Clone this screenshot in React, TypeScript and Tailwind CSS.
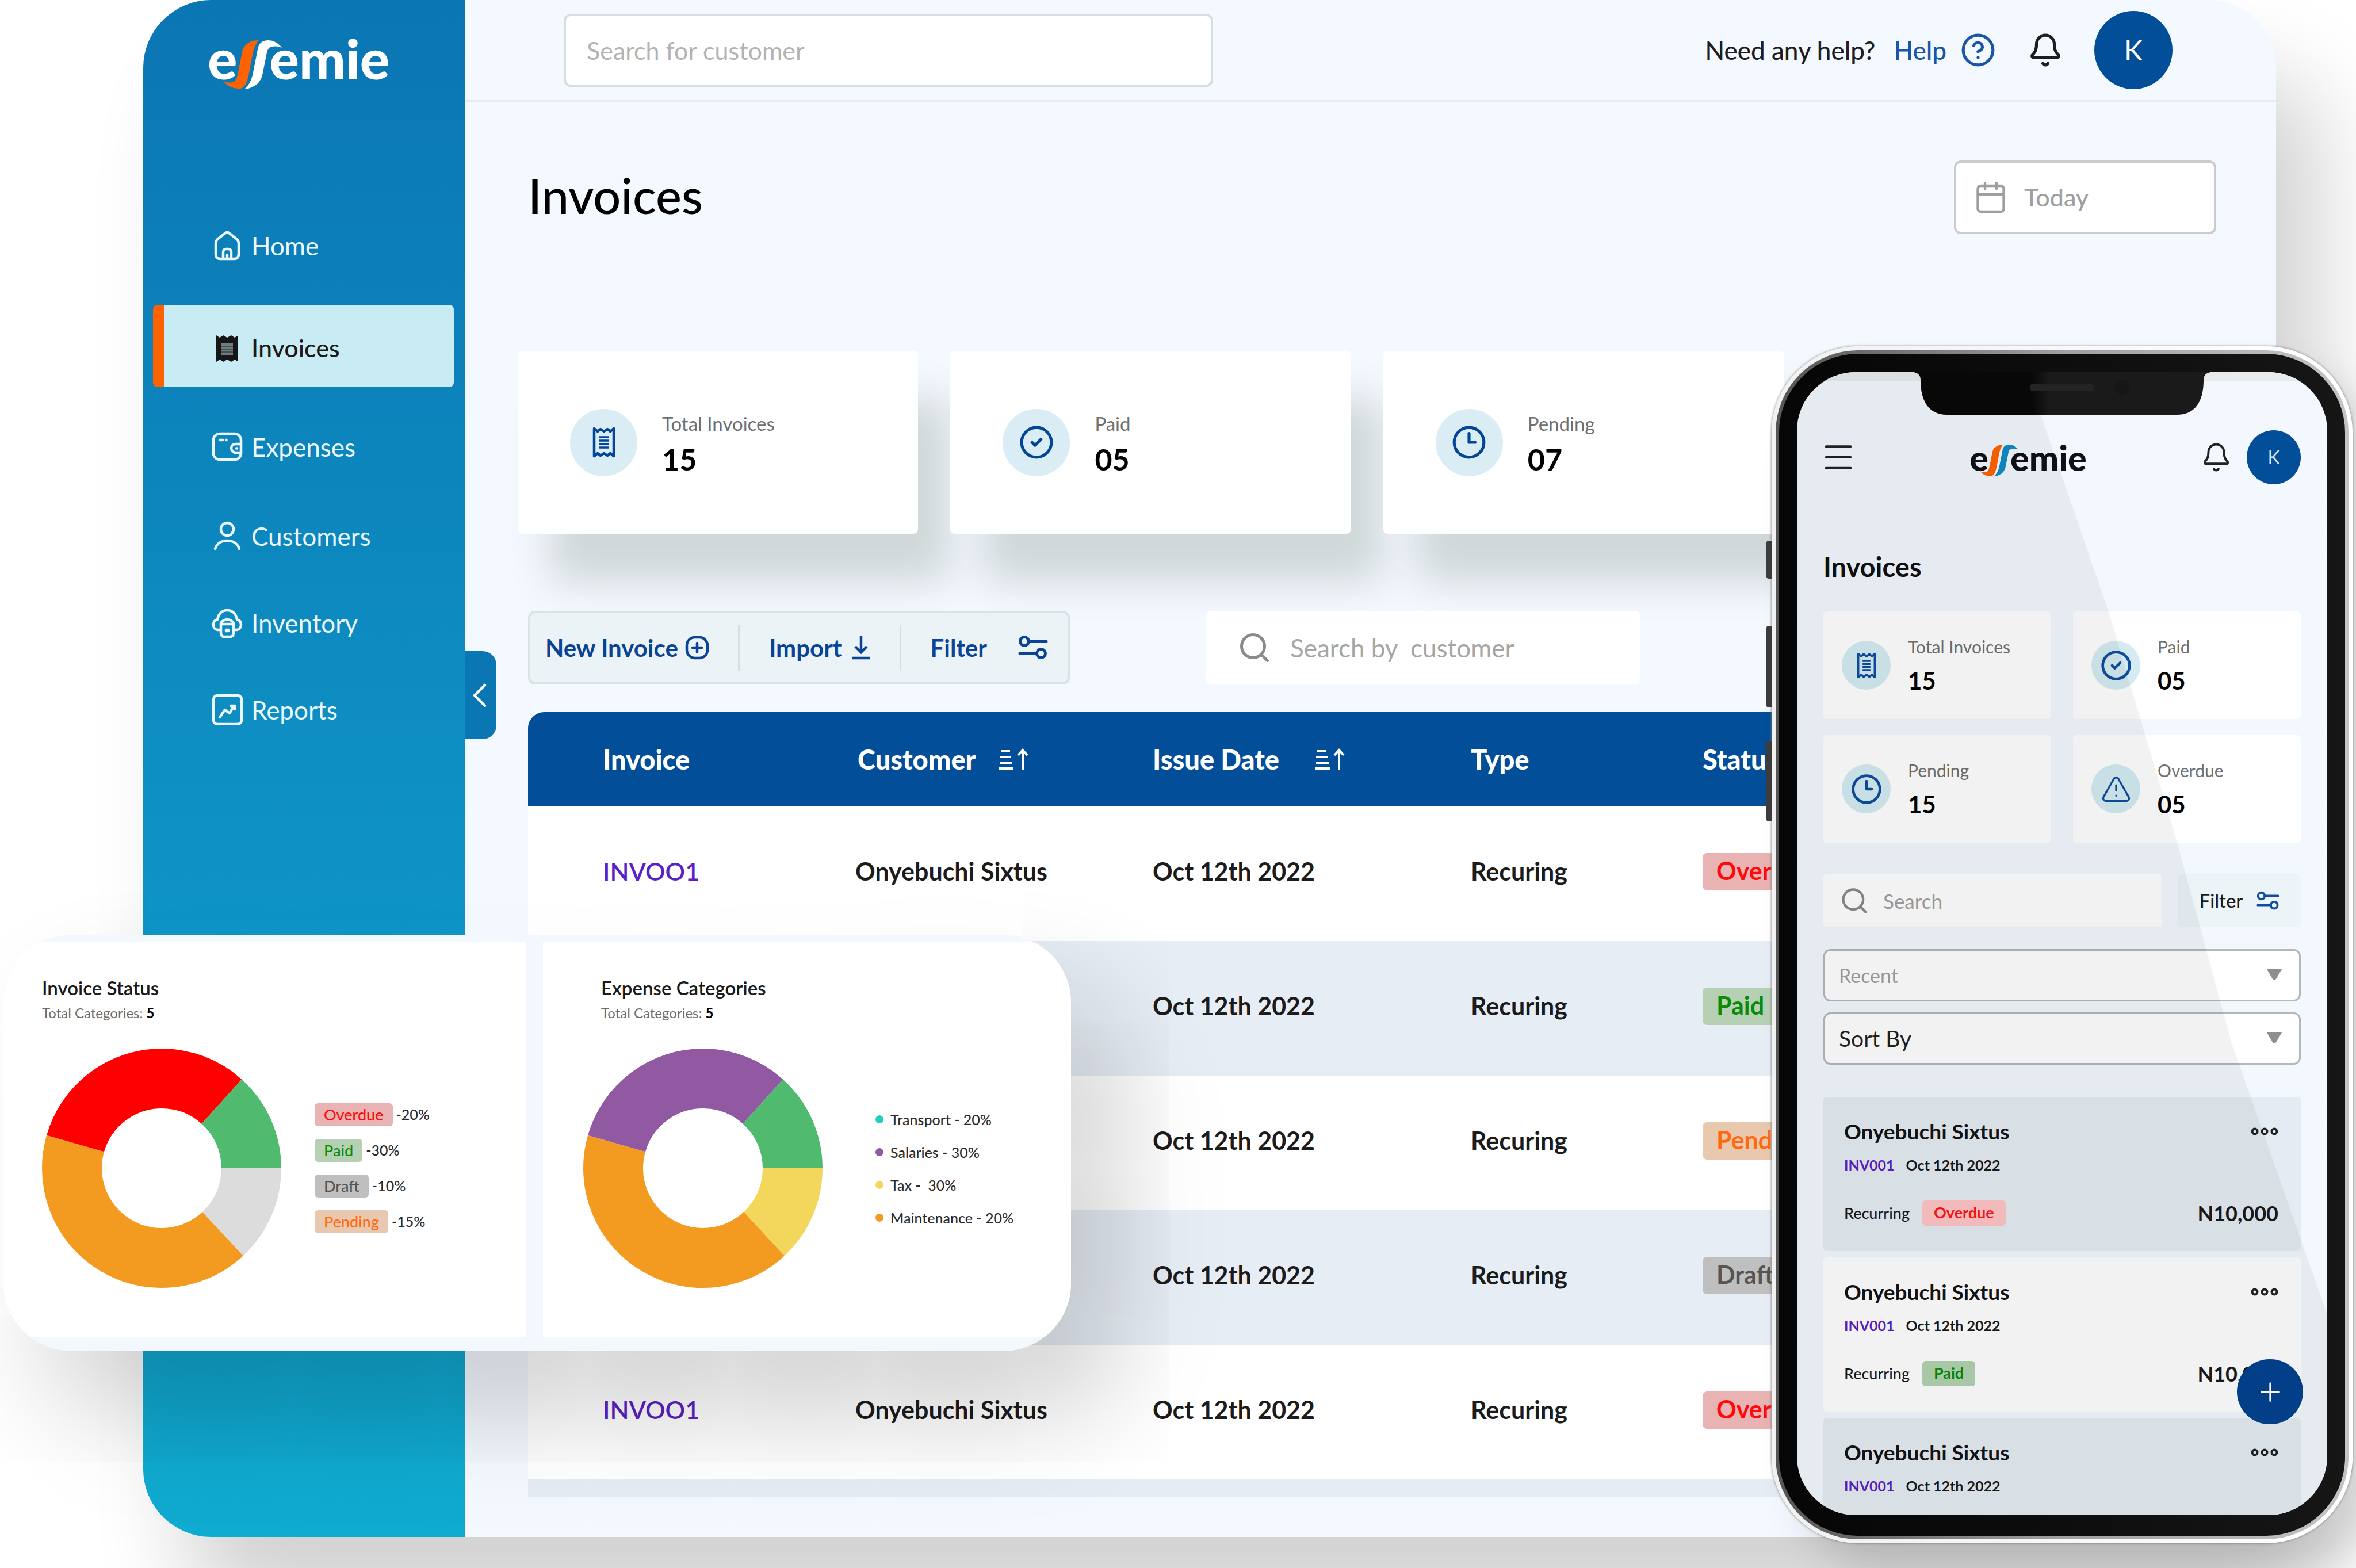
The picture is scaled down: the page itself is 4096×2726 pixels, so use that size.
import { ReactNode } from 'react';
import { Bell, Calendar, ChevronLeft, CircleCheck, CircleHelp, Clock3, Menu, Plus, Search, TriangleAlert } from 'lucide-react';

type Status = 'Overdue' | 'Paid' | 'Pending' | 'Draft';

const statusColors: Record<Status, string> = {
    Overdue: 'bg-[#e9b3b3] text-[#ff0a0a]',
    Paid: 'bg-[#b6d0b4] text-[#0a8c0a]',
    Pending: 'bg-[#e9c8b0] text-[#ff6a10]',
    Draft: 'bg-[#bfbfbf] text-[#555555]',
};

interface Invoice {
    id?: string;
    customer?: string;
    date: string;
    type: string;
    status: Status;
}

const invoices: Invoice[] = [
    { id: 'INVOO1', customer: 'Onyebuchi Sixtus', date: 'Oct 12th 2022', type: 'Recuring', status: 'Overdue' },
    { date: 'Oct 12th 2022', type: 'Recuring', status: 'Paid' },
    { date: 'Oct 12th 2022', type: 'Recuring', status: 'Pending' },
    { date: 'Oct 12th 2022', type: 'Recuring', status: 'Draft' },
    { id: 'INVOO1', customer: 'Onyebuchi Sixtus', date: 'Oct 12th 2022', type: 'Recuring', status: 'Overdue' },
];

/* ---------- icons ---------- */

function HomeIcon() {
    return (
        <svg viewBox="0 0 54 54" className="w-[54px] h-[54px]" fill="none" stroke="currentColor" strokeWidth="4.5" strokeLinejoin="round" strokeLinecap="round">
            <path d="M7 23c0-3 1-5 3-7L24 5c2-1.500 4-1.500 6 0l14 11c2 2 3 4 3 7v18c0 6-3 9-8 9H15c-5 0-8-3-8-9z" />
            <path d="M20 49V38c0-3 2-5 5-5h4c3 0 5 2 5 5v11M27 43v6" />
        </svg>
    );
}

function ReceiptSolidIcon() {
    return (
        <svg viewBox="0 0 54 54" className="w-[54px] h-[54px]">
            <path d="M8 4l6 4 6-4 7 4 7-4 6 4 6-4v46l-6-4-6 4-7-4-7 4-6-4-6 4z" fill="#161616" />
            <path d="M17 18h20v20H17z" fill="#6f7b7e" />
            <path d="M17 23h20M17 28h20M17 33h20" stroke="#3a4244" strokeWidth="1.500" />
        </svg>
    );
}

function WalletIcon() {
    return (
        <svg viewBox="0 0 54 54" className="w-[54px] h-[54px]" fill="none" stroke="currentColor" strokeWidth="4.5" strokeLinejoin="round" strokeLinecap="round">
            <rect x="3" y="4" width="48" height="45" rx="11" />
            <path d="M51 22H42c-5 0-8 3-8 7s3 8 8 8h9M43 29.500h1M14 15h5M25 15h.5" />
        </svg>
    );
}

function PersonIcon() {
    return (
        <svg viewBox="0 0 54 54" className="w-[54px] h-[54px]" fill="none" stroke="currentColor" strokeWidth="4.5" strokeLinecap="round">
            <circle cx="27" cy="15" r="11" />
            <path d="M6 49c3-9 11-14 21-14s18 5 21 14" />
        </svg>
    );
}

function InventoryIcon() {
    return (
        <svg viewBox="0 0 54 54" className="w-[54px] h-[54px]" fill="none" stroke="currentColor" strokeWidth="4.5" strokeLinejoin="round" strokeLinecap="round">
            <path d="M15 39H11c-5 0-8-4-8-9s3-8 7-9c2-10 8-16 17-16s15 6 17 16c4 1 7 4 7 9s-3 9-8 9h-4" />
            <path d="M16 27c3-4 6-6 11-6s8 2 11 6v17c0 4-2 7-6 7H22c-4 0-6-3-6-7z" />
            <path d="M16 29h22M25 39h4v2h-4z" />
        </svg>
    );
}

function ReportsIcon() {
    return (
        <svg viewBox="0 0 54 54" className="w-[54px] h-[54px]" fill="none" stroke="currentColor" strokeWidth="4.5" strokeLinejoin="round" strokeLinecap="round">
            <rect x="3" y="2" width="49" height="50" rx="7" />
            <path d="M14 40l9-13 8 6 8-13M33 20h7v6" />
        </svg>
    );
}

function ReceiptIcon({ className }: { className: string }) {
    return (
        <svg viewBox="0 0 40 56" className={className} fill="none" stroke="currentColor" strokeWidth="4.5">
            <path d="M3 4l6 5 5-4 6 4 6-4 5 4 6-5v48l-6-5-5 4-6-4-6 4-5-4-6 5z" strokeLinejoin="round" />
            <path d="M12 19h16M12 25h16M12 31h16M12 37h16" strokeWidth="3.500" />
        </svg>
    );
}

function AddSquareIcon() {
    return (
        <svg viewBox="0 0 42 42" className="w-[42px] h-[42px]" fill="none" stroke="currentColor" strokeWidth="4.5" strokeLinecap="round">
            <rect x="3" y="3" width="36" height="36" rx="14" />
            <path d="M21 13v16M13 21h16" />
        </svg>
    );
}

function ImportIcon() {
    return (
        <svg viewBox="0 0 34 44" className="w-[34px] h-[44px]" fill="none" stroke="currentColor" strokeWidth="4.5">
            <path d="M17 1v28M7 20l10 10 10-10M2 40h30" />
        </svg>
    );
}

function FilterIcon({ className }: { className: string }) {
    return (
        <svg viewBox="0 0 52 44" className={className} fill="none" stroke="currentColor" strokeWidth="5" strokeLinecap="round">
            <circle cx="11" cy="11" r="7.500" />
            <path d="M20 11h29M3 32h28" />
            <circle cx="40" cy="32" r="7.500" />
        </svg>
    );
}

function SortIcon() {
    return (
        <svg viewBox="0 0 52 40" className="w-[52px] h-[40px]" fill="none" stroke="currentColor" strokeWidth="4">
            <path d="M4 6h16M2 16h20M2 26h22M0 36h26M42 38V6M34 13l8-9 8 9" />
        </svg>
    );
}

function Logo({ textClass, markClass, first, second }: { textClass: string; markClass: string; first: string; second: string }) {
    return (
        <div className={`flex items-center font-black leading-none ${textClass}`}>
            <span>e</span>
            <svg viewBox="0 0 102 86" className={markClass}>
                <path d="M61 0C54 0 47 2 42 6C36 10 34 15 33 20L26 56C24 65 23 69 20 71C15 75 8 74 0 71C7 79 16 84 27 84C32 84 35 82 37 79C41 75 42 68 44 62L52 20C54 12 57 6 61 0Z" fill={first} />
                <path d="M102 13C95 4 87 0 78 0C70 0 64 4 62 9C60 13 60 17 59 21L52 56C50 68 45 78 37 85C47 84 56 80 62 73C66 68 68 62 69 56L76 21C78 14 80 12 86 11C92 10 97 11 102 13Z" fill={second} />
            </svg>
            <span>emie</span>
        </div>
    );
}

/* ---------- dashboard ---------- */

function NavItem({ icon, label, active, className }: { icon: ReactNode; label: string; active?: boolean; className: string }) {
    return (
        <a
            href="#"
            className={`flex items-center gap-[15px] pl-[83px] ml-[17px] mr-5 border-l-[19px] rounded-lg ${className} ${
                active ? 'pt-2 bg-[#c9ebf3] border-[#ff6200] text-[#1b1b1b] text-[43px] font-medium' : 'border-transparent text-[#eaf7ff] text-[44px]'
            }`}
        >
            {icon}
            {label}
        </a>
    );
}

function Sidebar() {
    return (
        <aside className="relative w-[560px] shrink-0 bg-gradient-to-b from-[#0b76b4] via-[#0e8fc2] to-[#10abd0]">
            <div className="pt-[46px] pl-[112px] h-[355px] text-white">
                <Logo textClass="text-[96px]" markClass="w-[102px] h-[86px] -ml-[24px] -mr-[22px] mt-[24px]" first="#ff6200" second="#ffffff" />
            </div>
            <nav>
                <div className="flex flex-col gap-8">
                    <NavItem className="h-[143px]" icon={<HomeIcon />} label="Home" />
                    <NavItem className="h-[143px]" icon={<ReceiptSolidIcon />} label="Invoices" active />
                    <NavItem className="h-[143px]" icon={<WalletIcon />} label="Expenses" />
                </div>
                <div className="flex flex-col pt-2">
                    <NavItem className="h-[151px]" icon={<PersonIcon />} label="Customers" />
                    <NavItem className="h-[151px]" icon={<InventoryIcon />} label="Inventory" />
                    <NavItem className="h-[151px]" icon={<ReportsIcon />} label="Reports" />
                </div>
            </nav>
            <button aria-label="Collapse menu" className="absolute left-full top-[1132px] w-[54px] h-[153px] rounded-r-[24px] bg-[#0b76b4] text-white flex items-center justify-center">
                <ChevronLeft size={72} strokeWidth={1.5} className="shrink-0 -ml-1" />
            </button>
        </aside>
    );
}

function TopBar() {
    return (
        <header className="h-[178px] border-b-4 border-[#e6ebf0] flex items-center justify-between pl-[171px] pr-[180px]">
            <input
                aria-label="Search for customer"
                placeholder="Search for customer"
                className="w-[1129px] h-[127px] px-9 bg-white border-4 border-[#d9dddd] rounded-xl text-[43px] placeholder:text-[#b3b3b3]"
            />
            <div className="flex items-center text-[44px] font-medium text-[#1e1e1e]">
                <span>Need any help?</span>
                <a href="#" className="flex items-center gap-6 ml-8 text-[#1a56a8]">
                    Help
                    <CircleHelp size={62} strokeWidth={2} />
                </a>
                <button aria-label="Notifications" className="ml-[55px]">
                    <Bell size={62} strokeWidth={2} />
                </button>
                <button className="ml-[54px] w-[136px] h-[136px] rounded-full bg-[#034e98] text-white text-[48px] font-normal">K</button>
            </div>
        </header>
    );
}

function StatCard({ icon, label, value }: { icon: ReactNode; label: string; value: string }) {
    return (
        <div className="h-[318px] bg-white rounded-lg flex items-center gap-[43px] pl-[91px] shadow-[56px_84px_70px_#d0d7d9]">
            <div className="w-[117px] h-[117px] rounded-full bg-[#daedf4] text-[#034697] flex items-center justify-center">{icon}</div>
            <div className="pt-2">
                <p className="text-[33px] leading-[50px] text-[#6f6f6f]">{label}</p>
                <p className="text-[52px] leading-[74px] font-bold text-black">{value}</p>
            </div>
        </div>
    );
}

function InvoiceTable() {
    return (
        <table className="w-full table-fixed text-left mt-12 text-[43px]">
            <colgroup>
                <col className="w-[569px]" />
                <col className="w-[517px]" />
                <col className="w-[553px]" />
                <col className="w-[403px]" />
                <col />
            </colgroup>
            <thead>
                <tr className="h-[164px] text-[47px] text-white bg-[#034e98]">
                    <th className="pl-[130px] font-black rounded-tl-[28px]">Invoice</th>
                    <th className="pl-1 font-black">
                        <span className="flex items-center gap-10">Customer <SortIcon /></span>
                    </th>
                    <th className="font-black">
                        <span className="flex items-center gap-[62px]">Issue Date <SortIcon /></span>
                    </th>
                    <th className="font-black">Type</th>
                    <th className="font-black">Status</th>
                </tr>
            </thead>
            <tbody>
                {invoices.map((inv, i) => (
                    <tr key={i} className="h-[234px] bg-white even:bg-[#e7edf5] text-[#1c1c1c] font-bold">
                        <td className="pl-[130px] pb-2">
                            {inv.id && <a href="#" className="text-[#5a22c4] font-semibold">{inv.id}</a>}
                        </td>
                        <td className="pb-2">{inv.customer}</td>
                        <td className="pb-2">{inv.date}</td>
                        <td className="pb-2">{inv.type}</td>
                        <td className="pb-2">
                            <span className={`inline-block h-[65px] px-6 leading-[62px] rounded-lg font-bold ${statusColors[inv.status]}`}>{inv.status}</span>
                        </td>
                    </tr>
                ))}
                <tr className="h-[30px] bg-[#e6ecf4]">
                    <td colSpan={5} />
                </tr>
            </tbody>
        </table>
    );
}

function Dashboard() {
    return (
        <div className="ml-[249px] mr-[139px] flex rounded-[118px] overflow-hidden bg-[#f4f9ff] shadow-[76px_130px_160px_rgba(0,0,0,0.18)]">
            <Sidebar />
            <div className="flex-1 min-w-0">
                <TopBar />
                <main className="pl-[109px] pr-[104px] pt-[101px] pb-[70px]">
                    <div className="flex items-center justify-between">
                        <h1 className="pb-2 text-[85px] leading-[120px] font-medium text-black">Invoices</h1>
                        <button className="w-[456px] h-[128px] flex items-center gap-7 pl-[30px] bg-white border-4 border-[#c9cbcc] rounded-xl text-[43px] font-medium text-[#9f9f9f]">
                            <Calendar size={60} strokeWidth={1.75} />
                            Today
                        </button>
                    </div>

                    <div className="grid grid-cols-3 gap-14 mt-[203px] -ml-[18px] w-3/4">
                        <StatCard icon={<ReceiptIcon className="w-[40px] h-[56px]" />} label="Total Invoices" value="15" />
                        <StatCard icon={<CircleCheck size={62} strokeWidth={2} />} label="Paid" value="05" />
                        <StatCard icon={<Clock3 size={62} strokeWidth={2} />} label="Pending" value="07" />
                    </div>

                    <div className="relative flex gap-[237px] mt-[134px]">
                        <div className="w-[942px] h-[128px] flex items-center justify-between pl-[26px] pr-[34px] bg-[#ecf3f6] border-4 border-[#dce1e4] rounded-xl text-[42px] font-bold text-[#0a4595]">
                            <button className="flex items-center gap-3">New Invoice <AddSquareIcon /></button>
                            <div className="w-[3px] h-[80px] bg-[#d8dde2]" />
                            <button className="flex items-center gap-4">Import <ImportIcon /></button>
                            <div className="w-[3px] h-[80px] bg-[#d8dde2]" />
                            <button className="flex items-center gap-[54px]">Filter <FilterIcon className="w-[52px] h-[44px]" /></button>
                        </div>
                        <label className="w-[754px] h-[128px] flex items-center gap-8 pl-[54px] bg-white rounded-lg text-[#8a8a8a]">
                            <Search size={60} strokeWidth={2} className="shrink-0" />
                            <input aria-label="Search by customer" placeholder="Search by  customer" className="min-w-0 flex-1 text-[44px] placeholder:text-[#a6a6a6]" />
                        </label>
                    </div>

                    <InvoiceTable />
                </main>
            </div>
        </div>
    );
}

/* ---------- chart card ---------- */

interface Slice {
    color: string;
    from: number;
    to: number;
}

// angles run clockwise from three o'clock
function Donut({ slices }: { slices: Slice[] }) {
    return (
        <svg viewBox="0 0 416 416" className="w-[416px] h-[416px] shrink-0">
            {slices.map((s) => (
                <circle
                    key={s.color}
                    cx="208"
                    cy="208"
                    r="156"
                    fill="none"
                    stroke={s.color}
                    strokeWidth="104"
                    pathLength="360"
                    strokeDasharray={`${s.to - s.from} 360`}
                    strokeDashoffset={-s.from}
                />
            ))}
        </svg>
    );
}

const statusLegend: { status: Status; share: string }[] = [
    { status: 'Overdue', share: '-20%' },
    { status: 'Paid', share: '-30%' },
    { status: 'Draft', share: '-10%' },
    { status: 'Pending', share: '-15%' },
];

const expenseLegend = [
    { dot: 'bg-[#1fd0bd]', label: 'Transport - 20%' },
    { dot: 'bg-[#9159a2]', label: 'Salaries - 30%' },
    { dot: 'bg-[#f3d65c]', label: 'Tax -  30%' },
    { dot: 'bg-[#f39b20]', label: 'Maintenance - 20%' },
];

function ChartCard() {
    return (
        <section className="absolute left-[6px] top-[1625px] w-[1856px] flex gap-[30px] pt-3 pb-6 rounded-[118px] overflow-hidden bg-[#f3f8fe] shadow-[80px_110px_200px_rgba(0,0,0,0.19)]">
            <div className="w-[908px] h-[688px] bg-white pl-[67px] pt-[60px]">
                <h2 className="text-[33px] leading-[40px] font-semibold text-[#1a1a1a]">Invoice Status</h2>
                <p className="mt-2 text-[24px] leading-[32px] text-[#6c6c6c]">Total Categories: <b className="text-black">5</b></p>
                <div className="flex items-center gap-[58px] mt-[46px]">
                    <Donut
                        slices={[
                            { color: '#dcdcdc', from: 0, to: 47 },
                            { color: '#f39b20', from: 47, to: 196 },
                            { color: '#ff0000', from: 196, to: 312 },
                            { color: '#50ba6f', from: 312, to: 360 },
                        ]}
                    />
                    <ul className="flex flex-col gap-[22px]">
                        {statusLegend.map((item) => (
                            <li key={item.status} className="flex items-center gap-1.5 text-[25px] font-medium text-[#2b2b2b]">
                                <span className={`h-[40px] px-4 leading-[39px] text-[27px] rounded-md ${statusColors[item.status]}`}>{item.status}</span>
                                {item.share}
                            </li>
                        ))}
                    </ul>
                </div>
            </div>
            <div className="flex-1 h-[688px] bg-white pl-[70px] pt-[60px]">
                <h2 className="pl-[31px] text-[33px] leading-[40px] font-semibold text-[#1a1a1a]">Expense Categories</h2>
                <p className="pl-[31px] mt-2 text-[24px] leading-[32px] text-[#6c6c6c]">Total Categories: <b className="text-black">5</b></p>
                <div className="flex items-center gap-[92px] mt-[46px]">
                    <Donut
                        slices={[
                            { color: '#f3d65c', from: 0, to: 47 },
                            { color: '#f39b20', from: 47, to: 196 },
                            { color: '#9159a2', from: 196, to: 312 },
                            { color: '#50ba6f', from: 312, to: 360 },
                        ]}
                    />
                    <ul className="flex flex-col gap-[25px]">
                        {expenseLegend.map((item) => (
                            <li key={item.label} className="flex items-center gap-3 text-[25px] leading-[32px] font-medium text-[#2b2b2b] whitespace-pre">
                                <span className={`w-[14px] h-[14px] rounded-full ${item.dot}`} />
                                {item.label}
                            </li>
                        ))}
                    </ul>
                </div>
            </div>
        </section>
    );
}

/* ---------- phone ---------- */

function PhoneStat({ icon, label, value }: { icon: ReactNode; label: string; value: string }) {
    return (
        <div className="h-[187px] bg-white rounded-md flex items-center gap-[30px] pl-8">
            <div className="w-[85px] h-[85px] rounded-full bg-[#d4ebf3] text-[#0f4da0] flex items-center justify-center">{icon}</div>
            <div className="pt-1">
                <p className="text-[30px] leading-[48px] text-[#707070]">{label}</p>
                <p className="text-[42px] leading-[70px] font-bold text-black">{value}</p>
            </div>
        </div>
    );
}

function PhoneSelect({ label, textClass }: { label: string; textClass: string }) {
    return (
        <div className="relative">
            <select aria-label={label} className={`w-full h-[91px] px-6 appearance-none bg-white border-3 border-[#b5b8b8] rounded-xl ${textClass}`}>
                <option>{label}</option>
            </select>
            <svg viewBox="0 0 28 20" className="absolute right-8 top-[34px] w-[28px] h-[20px] pointer-events-none">
                <path d="M1 1h26L17 18q-3 3-6 0z" fill="#8f8f8f" />
            </svg>
        </div>
    );
}

interface PhoneInvoiceProps {
    className: string;
    badge?: string;
    badgeClass?: string;
}

function PhoneInvoice({ className, badge, badgeClass }: PhoneInvoiceProps) {
    return (
        <article className={`h-[268px] shrink-0 rounded-md pl-9 pr-[39px] pt-[34px] ${className}`}>
            <div className="flex items-center justify-between">
                <h3 className="text-[37px] leading-[52px] font-bold text-[#151515]">Onyebuchi Sixtus</h3>
                <button aria-label="More options">
                    <svg viewBox="0 0 48 14" className="w-[48px] h-[14px]" fill="none" stroke="#222222" strokeWidth="4">
                        <circle cx="7" cy="7" r="4.500" />
                        <circle cx="24" cy="7" r="4.500" />
                        <circle cx="41" cy="7" r="4.500" />
                    </svg>
                </button>
            </div>
            <p className="flex gap-5 mt-3 text-[25px] leading-[40px] font-bold text-[#1b1b1b]">
                <a href="#" className="text-[#5a22c4]">INV001</a>
                Oct 12th 2022
            </p>
            {badge && (
                <div className="flex items-center mt-[38px] text-[27px] font-medium text-[#1b1b1b]">
                    Recurring
                    <span className={`ml-[22px] h-[44px] px-5 leading-[42px] rounded-md font-bold ${badgeClass}`}>{badge}</span>
                    <span className="ml-auto text-[36px] leading-[52px] font-bold">N10,000</span>
                </div>
            )}
        </article>
    );
}

function Phone() {
    return (
        <section className="absolute right-[6px] top-[602px] w-[1010px] p-[7px] rounded-[150px] bg-gradient-to-r from-[#f1f1f1] to-[#ffffff] shadow-[0_0_4px_#777777,50px_50px_70px_rgba(0,0,0,0.14)]">
            {/* side buttons */}
            <div className="absolute -left-[9px] top-[338px] w-[10px] h-[66px] rounded-l bg-[#3c3c3c]" />
            <div className="absolute -left-[9px] top-[486px] w-[10px] h-[142px] rounded-l bg-[#3c3c3c]" />
            <div className="absolute -left-[9px] top-[686px] w-[10px] h-[140px] rounded-l bg-[#3c3c3c]" />

            <div className="p-[6px] rounded-[143px] bg-gradient-to-r from-[#555555] via-[#a0a0a0] to-[#c4c4c4]">
                <div className="px-[31px] pt-[32px] pb-[36px] rounded-[137px] bg-gradient-to-r from-[#060606] to-[#161616]">
                    <div className="relative h-[1987px] rounded-[102px] overflow-hidden bg-[#f3f8ff] px-[46px]">
                        <div className="absolute top-0 left-0 w-full h-[16px] bg-[#e8eaec]" />

                        {/* glass reflection, drawn under the notch */}
                        <svg viewBox="0 0 922 1989" preserveAspectRatio="none" className="absolute z-10 inset-0 w-full h-full pointer-events-none">
                            <path d="M0 0H400L424 74L539 408L661 818L755 1165L922 1640V1989H0Z" fill="#000000" fillOpacity="0.05" />
                        </svg>

                        <svg viewBox="0 0 516 74" className="absolute z-10 top-0 left-[203px] w-[516px] h-[74px]">
                            <defs>
                                <linearGradient id="notch">
                                    <stop offset="0.4" stopColor="#080808" />
                                    <stop offset="0.46" stopColor="#1a1a1a" />
                                </linearGradient>
                            </defs>
                            <path d="M0 0h516q-12 2-12 14C504 50 490 74 458 74H58C26 74 12 50 12 14q0-12-12-14z" fill="url(#notch)" />
                            <rect x="202" y="20" width="111" height="13" rx="6" fill="#242424" />
                            <circle cx="363" cy="26" r="13" fill="#161616" />
                        </svg>

                        <div className="flex items-center justify-between pt-[101px]">
                            <button aria-label="Menu" className="w-[94px] text-[#222222]">
                                <Menu size={64} strokeWidth={1.5} className="-ml-1.5" />
                            </button>
                            <div className="pr-[38px] text-[#101018]">
                                <Logo textClass="text-[61px]" markClass="w-[67px] h-[56px] -ml-[15px] -mr-[14px] mt-3" first="#ff6200" second="#118cc4" />
                            </div>
                            <div className="flex items-center gap-[26px]">
                                <button aria-label="Notifications" className="text-[#222222]">
                                    <Bell size={54} strokeWidth={1.75} />
                                </button>
                                <button className="w-[94px] h-[94px] rounded-full bg-[#034e98] text-[#d5e6f7] text-[32px]">K</button>
                            </div>
                        </div>

                        <h2 className="mt-[113px] text-[47px] leading-[60px] font-bold text-[#111111]">Invoices</h2>

                        <div className="grid grid-cols-2 gap-x-[38px] gap-y-7 mt-[48px]">
                            <PhoneStat icon={<ReceiptIcon className="w-[34px] h-[48px]" />} label="Total Invoices" value="15" />
                            <PhoneStat icon={<CircleCheck size={56} strokeWidth={2} />} label="Paid" value="05" />
                            <PhoneStat icon={<Clock3 size={56} strokeWidth={2} />} label="Pending" value="15" />
                            <PhoneStat icon={<TriangleAlert size={54} strokeWidth={1.5} />} label="Overdue" value="05" />
                        </div>

                        <div className="flex gap-7 mt-[55px]">
                            <label className="flex-1 h-[92px] flex items-center gap-6 pl-7 bg-white rounded-md text-[#8a8a8a]">
                                <Search size={52} strokeWidth={2} className="shrink-0" />
                                <input aria-label="Search" placeholder="Search" className="min-w-0 flex-1 text-[35px] placeholder:text-[#a0a0a0]" />
                            </label>
                            <button className="w-[213px] flex items-center justify-center gap-6 bg-[#edf4f8] rounded-md text-[33px] font-medium text-[#1b1b1b]">
                                Filter
                                <FilterIcon className="w-[40px] h-[34px] text-[#0f4da0]" />
                            </button>
                        </div>

                        <div className="flex flex-col gap-[19px] mt-[38px]">
                            <PhoneSelect label="Recent" textClass="text-[34px] text-[#a0a0a0]" />
                            <PhoneSelect label="Sort By" textClass="text-[39px] text-[#222222]" />
                        </div>

                        <div className="flex flex-col gap-[11px] mt-[56px]">
                            <PhoneInvoice className="bg-[#e4ebf2]" badge="Overdue" badgeClass="bg-[#ffc5c5] text-[#ff1616]" />
                            <PhoneInvoice className="bg-white" badge="Paid" badgeClass="bg-[#b0d2b0] text-[#0a8c0a]" />
                            <PhoneInvoice className="bg-[#e4ebf2]" />
                        </div>

                        <button aria-label="New invoice" className="absolute z-10 right-[42px] bottom-[158px] w-[115px] h-[113px] rounded-full bg-[#033f88] text-white flex items-center justify-center">
                            <Plus size={52} strokeWidth={1.5} />
                        </button>
                    </div>
                </div>
            </div>
        </section>
    );
}

export default function App() {
    return (
        <div className="relative w-full min-h-screen pb-[53px] overflow-hidden bg-white font-['Lato',sans-serif]">
            <Dashboard />
            <ChartCard />
            <Phone />
        </div>
    );
}
